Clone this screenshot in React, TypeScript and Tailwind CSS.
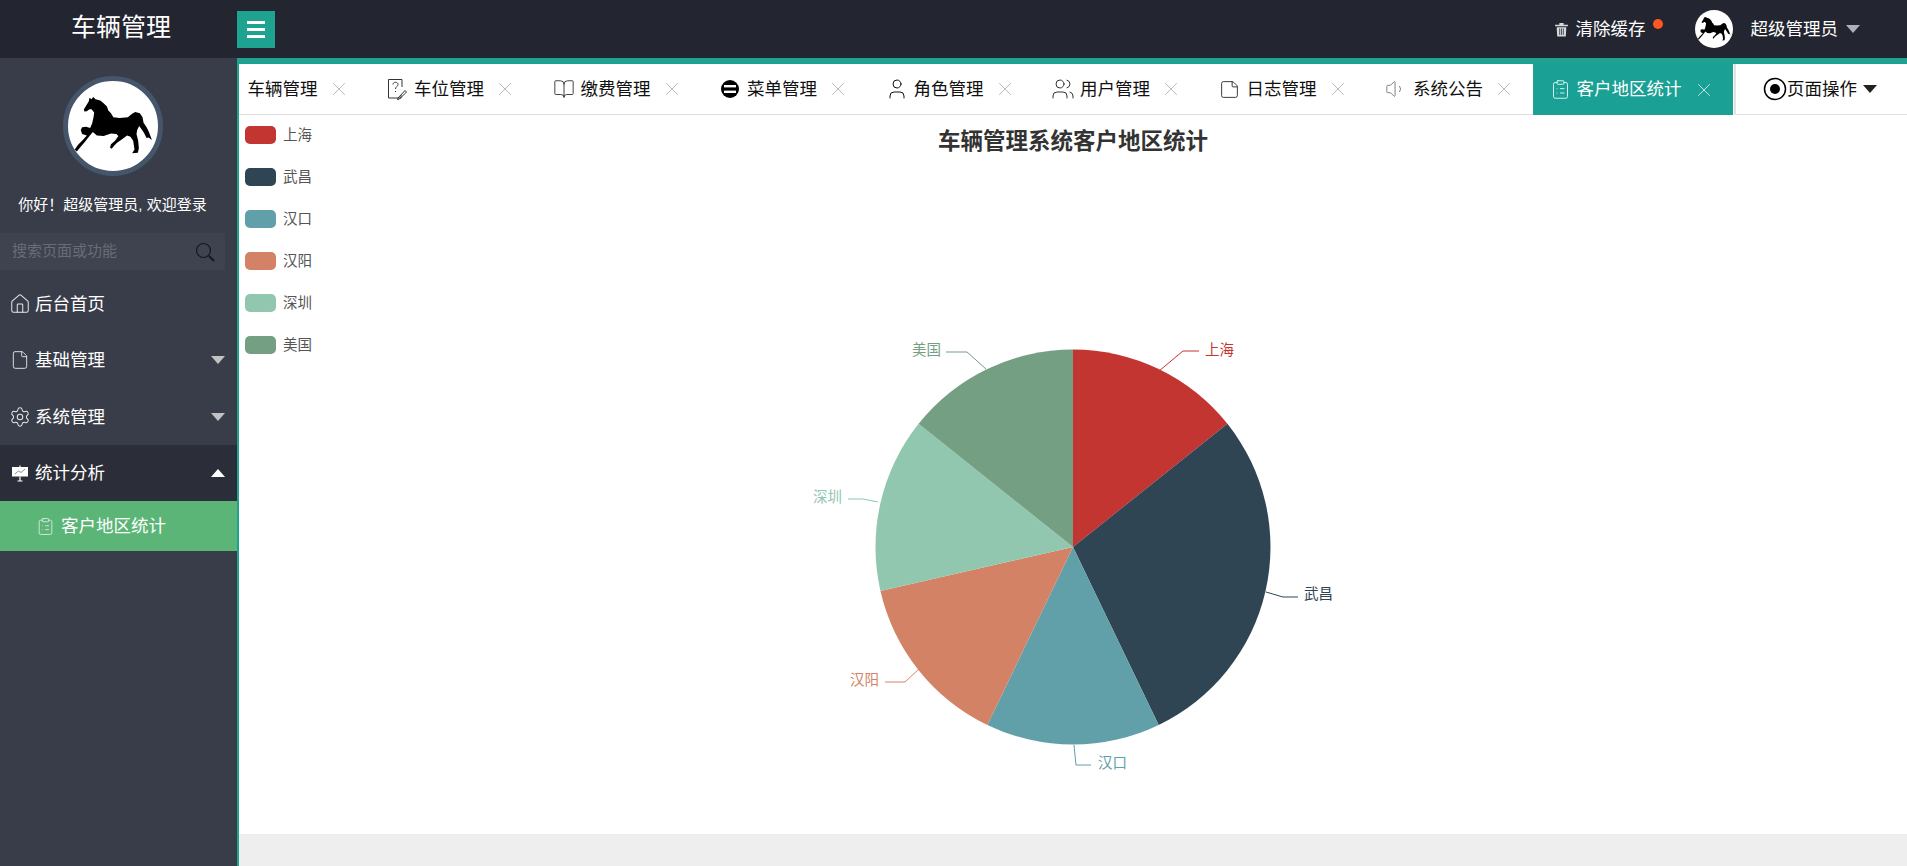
import {
  BookOpen,
  ClipboardList,
  File,
  House,
  Settings,
  StickyNote,
  User,
  Users,
  Volume1,
  X,
} from "lucide-react";
import type { ReactNode } from "react";

const HORSE =
  "M69 107 L75 97 L84 82 L86 72 L92 76 L97 70 L104 76 L118 80 L128 88 L138 98 L142 110 L150 118 L157 130 L176 132 L200 130 L212 120 L222 114 L236 118 L244 130 L247 146 L256 160 L262 172 L272 198 L262 190 L256 192 L248 176 L240 164 L234 156 L228 168 L226 180 L231 200 L233 222 L230 236 L213 237 L220 226 L216 200 L208 188 L198 184 L182 196 L168 206 L160 214 L152 224 L147 220 L150 210 L162 200 L172 186 L166 180 L150 178 L128 186 L108 184 L96 174 L86 186 L72 204 L58 220 L48 232 L42 226 L52 212 L66 198 L78 184 L64 180 L60 168 L64 160 L76 158 L88 162 L94 148 L98 130 L100 116 L92 106 L86 106 L78 112 L71 113 Z";

const Horse = () => (
  <svg viewBox="22 22 268 268" className="block h-full w-full">
    <path d={HORSE} fill="#000" />
  </svg>
);

const Caret = ({ up, color }: { up?: boolean; color: string }) => (
  <svg width="14" height="8" viewBox="0 0 14 8" className="block">
    <path d={up ? "M7 0 L14 8 L0 8 Z" : "M0 0 L14 0 L7 8 Z"} fill={color} />
  </svg>
);

const FileQuestion = () => (
  <svg width="20" height="22" viewBox="0 0 20 22" fill="none" stroke="#333" strokeWidth="1">
    <path d="M14 17 V20 H1.5 V1.5 H15 V9" />
    <path d="M6 6.5 C6 3.5 11 3.5 11 6.5 C11 8.5 8.5 8.5 8.5 11" />
    <path d="M8.5 13 V14" />
    <path d="M11 20 L18 12.5 L19.5 14 L12.5 21 L10.5 21.5 Z" />
  </svg>
);

const MenuDisc = () => (
  <svg width="18" height="18" viewBox="0 0 18 18">
    <circle cx="9" cy="9" r="9" fill="#000" />
    <rect x="3" y="5" width="12" height="2.4" fill="#fff" />
    <rect x="3" y="10.6" width="12" height="2.4" fill="#fff" />
  </svg>
);

const Board = () => (
  <svg width="18" height="18" viewBox="0 0 18 18">
    <rect x="1" y="3" width="16" height="9.5" fill="#fff" />
    <path d="M9 1.5 V3 M9 12.5 V17 M6.5 17 H11.5" stroke="#fff" strokeWidth="1.2" />
    <path d="M4 10 L7.5 7 L10 8.5 L14 5" stroke="#8a8d96" strokeWidth="1" fill="none" />
  </svg>
);

const Trash = () => (
  <svg width="15" height="15" viewBox="0 0 14 14" fill="#d8d8d8">
    <path d="M1 2.5 H13 V4 H1 Z M5 1 H9 V2.5 H5 Z" />
    <path d="M2.5 5 H11.5 L11 13.5 H3 Z" />
    <path d="M5.3 6 V12 M7 6 V12 M8.7 6 V12" stroke="#232530" strokeWidth="0.7" />
  </svg>
);

const line = { strokeWidth: 1, color: "#333" };

const tabs: { label: string; icon: ReactNode }[] = [
  { label: "车辆管理", icon: <User {...line} size={22} /> },
  { label: "车位管理", icon: <FileQuestion /> },
  { label: "缴费管理", icon: <BookOpen {...line} size={22} /> },
  { label: "菜单管理", icon: <MenuDisc /> },
  { label: "角色管理", icon: <User {...line} size={24} color="#111" /> },
  { label: "用户管理", icon: <Users {...line} size={24} /> },
  { label: "日志管理", icon: <StickyNote {...line} size={21} color="#222" /> },
  { label: "系统公告", icon: <Volume1 {...line} size={22} color="#777" /> },
];

const Tab = ({ label, icon }: { label: string; icon: ReactNode }) => (
  <div className="flex h-full w-[166.5px] shrink-0 items-center border-b border-[#ddd] pl-5">
    <span className="flex w-5 shrink-0 justify-center [&>svg]:shrink-0">{icon}</span>
    <span className="ml-[7px] w-[70px] shrink-0 whitespace-nowrap text-[#111]">{label}</span>
    <X size={22} strokeWidth={1} color="#b4b4b4" className="ml-[10px] shrink-0" />
  </div>
);

const slices = [
  { name: "上海", value: 1, color: "#c23531" },
  { name: "武昌", value: 2, color: "#2f4554" },
  { name: "汉口", value: 1, color: "#61a0a8" },
  { name: "汉阳", value: 1, color: "#d48265" },
  { name: "深圳", value: 1, color: "#91c7ae" },
  { name: "美国", value: 1, color: "#749f83" },
];

// label lines, in chart coordinates
const labels = [
  { line: "920,256 944,236 960,236", x: 966, y: 235, anchor: "start" },
  { line: "1027,477 1044,482 1059,482", x: 1065, y: 479, anchor: "start" },
  { line: "835,630 837,650 852,650", x: 859, y: 648, anchor: "start" },
  { line: "681,553 666,567 646,567", x: 640, y: 565, anchor: "end" },
  { line: "639,387 624,384 609,384", x: 603, y: 382, anchor: "end" },
  { line: "747,254 728,237 707,237", x: 702, y: 235, anchor: "end" },
];

const CX = 834;
const CY = 432;
const R = 197.5;

const pt = (deg: number) => {
  const a = (deg * Math.PI) / 180;
  return `${(CX + R * Math.sin(a)).toFixed(2)} ${(CY - R * Math.cos(a)).toFixed(2)}`;
};

const PieChart = () => {
  let start = 0;
  return (
    <svg width="1667" height="719" viewBox="0 0 1667 719" className="block">
      <text x="834" y="26" textAnchor="middle" dominantBaseline="central" fontSize="22.5" fontWeight="700" fill="#333">
        车辆管理系统客户地区统计
      </text>
      {slices.map((s, i) => (
        <g key={s.name}>
          <rect x="6" y={11 + i * 42} width="31" height="18" rx="5" fill={s.color} />
          <text x="44" y={20 + i * 42} dominantBaseline="central" fontSize="14.5" fill="#555">
            {s.name}
          </text>
        </g>
      ))}
      {slices.map((s) => {
        const end = start + (s.value / 7) * 360;
        const d = `M${CX} ${CY} L${pt(start)} A${R} ${R} 0 ${end - start > 180 ? 1 : 0} 1 ${pt(end)} Z`;
        start = end;
        return <path key={s.name} d={d} fill={s.color} />;
      })}
      {labels.map((l, i) => (
        <g key={slices[i].name}>
          <polyline points={l.line} fill="none" stroke={slices[i].color} strokeWidth="1" />
          <text
            x={l.x}
            y={l.y}
            textAnchor={l.anchor as "start" | "end"}
            dominantBaseline="central"
            fontSize="14.5"
            fill={slices[i].color}
          >
            {slices[i].name}
          </text>
        </g>
      ))}
    </svg>
  );
};

const MenuRow = ({
  icon,
  label,
  caret,
  active,
}: {
  icon: ReactNode;
  label: string;
  caret?: "up" | "down";
  active?: boolean;
}) => (
  <div className={`flex h-[56.3px] items-center pl-[11px] pr-3 ${active ? "bg-[#2b2e38]" : ""}`}>
    <span className="flex w-[18px] shrink-0 justify-center [&>svg]:shrink-0">{icon}</span>
    <span className="ml-[6px] flex-1 text-white">{label}</span>
    {caret && <Caret up={caret === "up"} color={caret === "up" ? "#fff" : "#c2c2c2"} />}
  </div>
);

export default function App() {
  return (
    <div className="flex h-screen flex-col overflow-hidden bg-white font-['Liberation_Sans','Noto_Sans_CJK_SC',sans-serif] text-[17.5px]">
      <header className="flex h-[58px] shrink-0 items-center bg-[#232530]">
        <div className="-mt-[2px] w-[237px] pl-[5px] text-center text-[25px] text-white">车辆管理</div>
        <button className="flex h-[37px] w-[38px] flex-col items-center justify-center gap-1 bg-[#1fa391]">
          <span className="h-[3px] w-[18px] bg-white" />
          <span className="h-[3px] w-[18px] bg-white" />
          <span className="h-[3px] w-[18px] bg-white" />
        </button>
        <div className="ml-auto flex items-center pr-[47px] text-white">
          <Trash />
          <span className="ml-[7px]">清除缓存</span>
          <span className="mb-[10px] ml-[7px] h-[10px] w-[10px] rounded-full bg-[#ff5722]" />
          <div className="ml-[32px] h-[38px] w-[38px] overflow-hidden rounded-full bg-white">
            <Horse />
          </div>
          <span className="ml-[18px]">超级管理员</span>
          <span className="ml-[8px]">
            <Caret color="#b0b0b8" />
          </span>
        </div>
      </header>

      <div className="flex min-h-0 flex-1">
        <aside className="w-[237px] shrink-0 bg-[#393d49]">
          <div className="w-[225px]">
            <div className="mx-auto mt-[18px] h-[100px] w-[100px] rounded-full border-[5px] border-[#45566b] bg-white">
              <Horse />
            </div>
            <p className="mt-[19px] whitespace-nowrap text-center text-[15px] leading-[20px] text-white">
              你好！超级管理员, 欢迎登录
            </p>
            <div className="mt-[18px] flex h-[37px] items-center justify-between bg-[#3f4350] pl-3 pr-[10px]">
              <span className="text-[15px] text-[#696c76]">搜索页面或功能</span>
              <svg width="20" height="20" viewBox="0 0 20 20" fill="none" stroke="#15171c" strokeWidth="1.2">
                <circle cx="8.5" cy="8.5" r="7" />
                <path d="M14 14 L19 19" strokeWidth="2" />
              </svg>
            </div>
          </div>
          <nav className="mt-[6px]">
            <MenuRow icon={<House size={22} strokeWidth={1.1} color="#e8e8e8" />} label="后台首页" />
            <MenuRow icon={<File size={20} strokeWidth={1.1} color="#e8e8e8" />} label="基础管理" caret="down" />
            <MenuRow icon={<Settings size={22} strokeWidth={1.1} color="#e8e8e8" />} label="系统管理" caret="down" />
            <MenuRow icon={<Board />} label="统计分析" caret="up" active />
            <div className="flex h-[50px] items-center bg-[#5bb577] pl-9 text-white">
              <ClipboardList size={19} strokeWidth={1} color="#f0f0f0" className="shrink-0" />
              <span className="ml-[6px]">客户地区统计</span>
            </div>
          </nav>
        </aside>

        <main className="flex min-w-0 flex-1 flex-col border-l-2 border-[#1fa391]">
          <div className="h-[6px] shrink-0 bg-[#1fa391]" />
          <div className="flex h-[51px] shrink-0 items-stretch overflow-hidden">
            <div className="flex min-w-0 flex-1 overflow-hidden">
              <div className="-ml-[38.5px] flex">
                {tabs.map((t) => (
                  <Tab key={t.label} {...t} />
                ))}
                <div className="flex w-[200.5px] shrink-0 items-center bg-[#1aa094] pl-[17px] text-white">
                  <ClipboardList size={21} strokeWidth={1} color="#e8fff8" className="shrink-0" />
                  <span className="ml-[6px] whitespace-nowrap">客户地区统计</span>
                  <X size={22} strokeWidth={1} color="#cfe9e4" className="ml-[11px] shrink-0" />
                </div>
              </div>
            </div>
            <div className="flex w-[173px] shrink-0 items-center border-b border-l-2 border-[#e2e2e2] pl-[27px] text-[#111]">
              <svg width="24" height="24" viewBox="0 0 24 24" className="shrink-0">
                <circle cx="12" cy="12" r="10.5" fill="none" stroke="#000" strokeWidth="1.5" />
                <circle cx="12" cy="12" r="5" fill="#000" />
              </svg>
              <span className="whitespace-nowrap">页面操作</span>
              <span className="ml-[6px]">
                <Caret color="#222" />
              </span>
            </div>
          </div>
          <div className="flex-1 overflow-hidden bg-white">
            <PieChart />
          </div>
          <div className="h-[32px] shrink-0 bg-[#eeeeee]" />
        </main>
      </div>
    </div>
  );
}
